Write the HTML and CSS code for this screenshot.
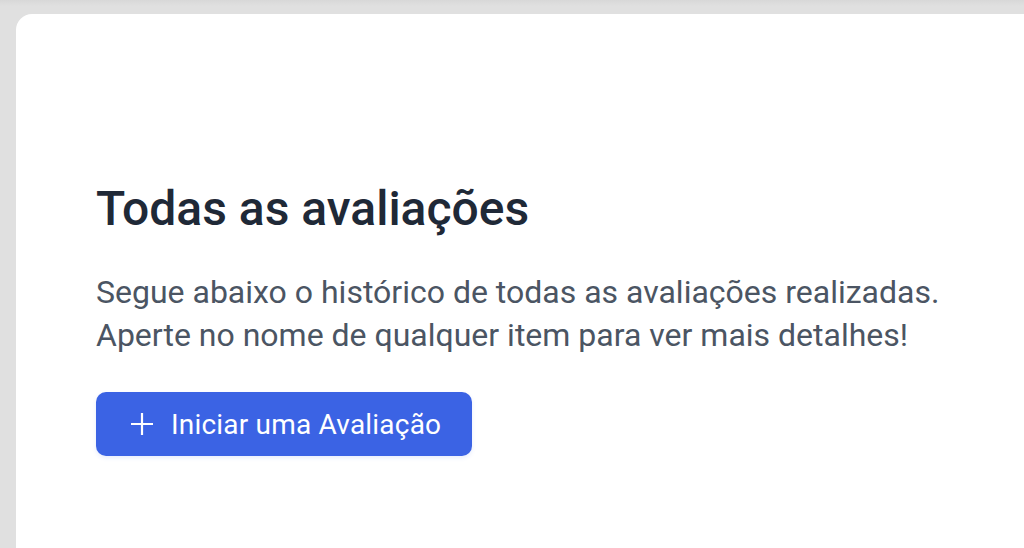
FILE: index.html
```html
<!DOCTYPE html>
<html lang="pt">
<head>
<meta charset="utf-8">
<link rel="stylesheet" href="styles.css">
</head>
<body>
<main class="card">
  <h1 class="title">Todas as avaliações</h1>
  <p class="desc">Segue abaixo o histórico de todas as avaliações realizadas.<br>Aperte no nome de qualquer item para ver mais detalhes!</p>
  <button class="btn" type="button">
    <svg class="plus" width="22" height="22" viewBox="0 0 22 22" aria-hidden="true"><path d="M11 0v22M0 11h22" stroke="#fff" stroke-width="2.2" fill="none"/></svg>
    <span>Iniciar uma Avaliação</span>
  </button>
</main>
</body>
</html>
```

FILE: styles.css
```css
html, body {
  margin: 0;
  padding: 0;
  height: 100%;
  overflow: hidden;
}
body {
  background: linear-gradient(#d8d8d8 0, #e0e0e0 6px, #e0e0e0 100%);
  font-family: Roboto, "Noto Sans", sans-serif;
}
.card {
  margin: 14px 0 0 16px;
  background: #fff;
  border-radius: 16px 0 0 0;
  height: 534px;
  padding: 167px 0 0 80px;
  box-sizing: border-box;
}
.title {
  margin: 0;
  font-size: 48px;
  line-height: 56px;
  font-weight: 500;
  color: #1f2937;
}
.desc {
  margin: 34px 0 0 0;
  font-size: 32px;
  line-height: 43px;
  color: #4b5563;
}
.btn {
  margin-top: 35px;
  display: flex;
  align-items: center;
  gap: 18px;
  height: 64px;
  padding: 0 31px 0 35px;
  background: #3b63e4;
  border: none;
  border-radius: 10px;
  color: #fff;
  font-family: Roboto, "Noto Sans", sans-serif;
  font-size: 28px;
  letter-spacing: 0.2px;
  box-shadow: 0 2px 4px rgba(59, 99, 228, 0.12);
}
.plus { display: block; }
```
